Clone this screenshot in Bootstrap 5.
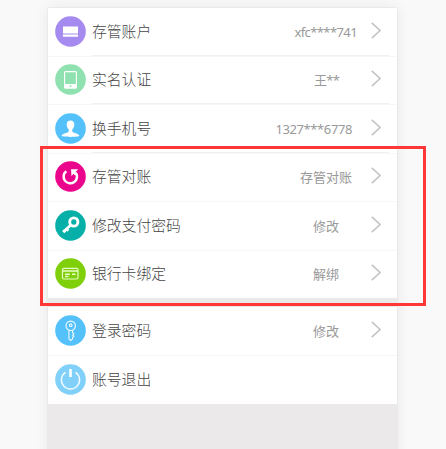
<!DOCTYPE html>
<html lang="zh-CN">
<head>
<meta charset="utf-8">
<meta name="viewport" content="width=device-width, initial-scale=1">
<title>账户设置</title>
<link href="https://cdn.jsdelivr.net/npm/bootstrap@5.3.0/dist/css/bootstrap.min.css" rel="stylesheet">
<style>
body{background:#f9f9f9;font-family:"Noto Sans","Noto Sans CJK SC",sans-serif;height:449px}
.phone{width:349px;height:460px;margin-left:48px;background:#ebe9ea;box-shadow:0 0 14px rgba(0,0,0,.08),0 0 1px rgba(0,0,0,.16)}
.group-a{height:290px;margin-bottom:9px}
.group-b{height:97px}
.entry{flex:1 1 0;padding-left:7px;padding-right:16px;border-bottom:1px solid #f7f7f7}
.entry:last-child{border-bottom:0}
.ico{width:31px;height:31px;flex:none;margin-top:-1px}
.line{height:100%;margin-left:6px;margin-right:-8px;padding-right:8px}
.ruled .line{box-shadow:inset 0 -1px #f0f0f0}
.label{font-size:14.8px;line-height:20px;color:#444;font-weight:300;margin-top:-2px}
.val{font-size:13px;line-height:18px;color:#999;font-weight:400;margin-right:32px}
.val-wide{margin-right:14px;letter-spacing:-.6px}
.val-mid{margin-right:19px}
.val-phone{letter-spacing:-.4px}
.val-name{letter-spacing:-.8px}
.chev{width:10px;height:17px;flex:none;margin-top:-3px}
.highlight{left:40px;top:146px;width:386px;height:160px;border:3px solid #ff3737}
</style>
</head>
<body class="overflow-hidden position-relative pt-2">
<main class="phone">
  <section class="group-a bg-white d-flex flex-column">
    <div class="entry ruled d-flex align-items-center">
      <svg class="ico" viewBox="0 0 31 31"><circle cx="15.5" cy="15.5" r="15.3" fill="#a58af0"/><path d="M8 10.5h15v7H8zM8 18.5h15v2.2H8z" fill="#fff"/></svg>
      <div class="line flex-grow-1 d-flex align-items-center"><span class="label me-auto">存管账户</span><span class="val val-wide">xfc****741</span>
      <svg class="chev" viewBox="0 0 10 17"><path d="M.8.8 9 8.5.8 16.2" fill="none" stroke="#c5c5c5" stroke-width="1.6"/></svg></div>
    </div>
    <div class="entry ruled d-flex align-items-center">
      <svg class="ico" viewBox="0 0 31 31"><circle cx="15.5" cy="15.5" r="15.3" fill="#8fe1af"/><rect x="9.6" y="7.6" width="11.8" height="16.6" rx="1" fill="none" stroke="#fff" stroke-width="1.1"/><path d="M9.5 20h12v4h-12z" fill="#fff"/><circle cx="15.5" cy="22" r=".9" fill="#8fe1af"/></svg>
      <div class="line flex-grow-1 d-flex align-items-center"><span class="label me-auto">实名认证</span><span class="val val-name">王**</span>
      <svg class="chev" viewBox="0 0 10 17"><path d="M.8.8 9 8.5.8 16.2" fill="none" stroke="#c5c5c5" stroke-width="1.6"/></svg></div>
    </div>
    <div class="entry ruled d-flex align-items-center">
      <svg class="ico" viewBox="0 0 31 31"><circle cx="15.5" cy="15.5" r="15.3" fill="#54c1fb"/><path d="M15.5 7.6c-2.6 0-3.900 1.700-3.800 4.100 0 1.700.8 3.500 2 4.600v2.200c-.5 1.400-6 1.600-7.200 4.300 0 1.500 18 1.500 18 0-1.200-2.700-6.700-2.900-7.200-4.300v-2.200c1.200-1.100 2-2.900 2-4.600.1-2.400-1.200-4.100-3.800-4.100z" fill="#fff"/></svg>
      <div class="line flex-grow-1 d-flex align-items-center"><span class="label me-auto">换手机号</span><span class="val val-mid val-phone">1327***6778</span>
      <svg class="chev" viewBox="0 0 10 17"><path d="M.8.8 9 8.5.8 16.2" fill="none" stroke="#c5c5c5" stroke-width="1.6"/></svg></div>
    </div>
    <div class="entry d-flex align-items-center">
      <svg class="ico" viewBox="0 0 31 31"><circle cx="15.5" cy="15.5" r="15.3" fill="#eb058c"/><path d="M11.3 10.3A6.700 6.700 0 1 0 20.800 11.800" fill="none" stroke="#fff" stroke-width="2.5"/><path d="M16 8.300h7.200L20.600 11l1.300 2.300-1.800 1.300-1.700-1.800-1.900 2.400z" fill="#fff"/></svg>
      <div class="line flex-grow-1 d-flex align-items-center"><span class="label me-auto">存管对账</span><span class="val val-mid">存管对账</span>
      <svg class="chev" viewBox="0 0 10 17"><path d="M.8.8 9 8.5.8 16.2" fill="none" stroke="#c5c5c5" stroke-width="1.6"/></svg></div>
    </div>
    <div class="entry d-flex align-items-center">
      <svg class="ico" viewBox="0 0 31 31"><circle cx="15.5" cy="15.5" r="15.3" fill="#06b0a9"/><circle cx="18.8" cy="12" r="4.100" fill="none" stroke="#fff" stroke-width="2.9"/><path d="m15.500 15.200-7 6.500M11.300 18.800l2 2M8.200 20l2 2.300" fill="none" stroke="#fff" stroke-width="2.7"/></svg>
      <div class="line flex-grow-1 d-flex align-items-center"><span class="label me-auto">修改支付密码</span><span class="val">修改</span>
      <svg class="chev" viewBox="0 0 10 17"><path d="M.8.8 9 8.5.8 16.2" fill="none" stroke="#c5c5c5" stroke-width="1.6"/></svg></div>
    </div>
    <div class="entry d-flex align-items-center">
      <svg class="ico" viewBox="0 0 31 31"><circle cx="15.5" cy="15.5" r="15.3" fill="#80cf0b"/><g fill="none" stroke="#e6ffc4" stroke-width="1.2"><rect x="7.5" y="10.3" width="15.5" height="10.7" rx="1.5"/><path d="M7.500 12.900h15.500M10 16.200h5M17 16.200h3.500M10 18.500h3.500" stroke-width="1.5"/></g></svg>
      <div class="line flex-grow-1 d-flex align-items-center"><span class="label me-auto">银行卡绑定</span><span class="val">解绑</span>
      <svg class="chev" viewBox="0 0 10 17"><path d="M.8.8 9 8.5.8 16.2" fill="none" stroke="#c5c5c5" stroke-width="1.6"/></svg></div>
    </div>
  </section>
  <section class="group-b bg-white d-flex flex-column">
    <div class="entry d-flex align-items-center">
      <svg class="ico" viewBox="0 0 31 31"><circle cx="15.5" cy="15.5" r="15.3" fill="#54c1fb"/><g fill="none" stroke="#effaff" stroke-width="1.1"><circle cx="15.7" cy="10.8" r="4.7"/><circle cx="15.7" cy="10.2" r="1.3"/><path d="M13.900 15.200v8.600l1.800 1.700 1.900-1.700v-1.600l1.300-1-1.300-1.200 1.300-1.200-1.300-1.200v-2.400"/></g></svg>
      <div class="line flex-grow-1 d-flex align-items-center"><span class="label me-auto">登录密码</span><span class="val">修改</span>
      <svg class="chev" viewBox="0 0 10 17"><path d="M.8.8 9 8.5.8 16.2" fill="none" stroke="#c5c5c5" stroke-width="1.6"/></svg></div>
    </div>
    <div class="entry d-flex align-items-center">
      <svg class="ico" viewBox="0 0 31 31"><circle cx="15.5" cy="15.5" r="15.3" fill="#80d0f9"/><path d="M10.500 8.300A9.100 9.100 0 1 0 20.500 8.300" fill="none" stroke="#f4fcff" stroke-width="1.4"/><path d="M15.500 5v8" stroke="#fff" stroke-width="2.6"/></svg>
      <div class="line flex-grow-1 d-flex align-items-center"><span class="label">账号退出</span></div>
    </div>
  </section>
</main>
<div class="highlight position-absolute"></div>
<script src="https://cdn.jsdelivr.net/npm/bootstrap@5.3.0/dist/js/bootstrap.bundle.min.js"></script>
</body>
</html>
